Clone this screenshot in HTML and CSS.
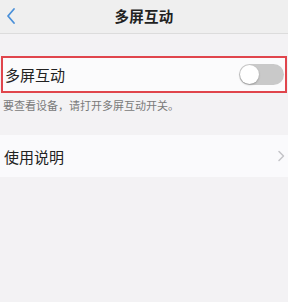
FILE: index.html
```html
<!DOCTYPE html>
<html>
<head>
<meta charset="utf-8">
<link rel="stylesheet" href="styles.css">
</head>
<body>
<div class="nav">
  <svg class="back" width="12" height="18" viewBox="0 0 12 18"><path d="M9 2 L3 9 L9 16" fill="none" stroke="#4a90d9" stroke-width="1.8" stroke-linecap="round" stroke-linejoin="round"/></svg>
  <div class="title">多屏互动</div>
</div>
<div class="gap1"></div>
<div class="row highlight">
  <span class="label">多屏互动</span>
  <span class="toggle"><span class="knob"></span></span>
</div>
<div class="caption">要查看设备，请打开多屏互动开关。</div>
<div class="gap2"></div>
<div class="row plain">
  <span class="label">使用说明</span>
  <svg class="chev" width="8" height="12" viewBox="0 0 8 12"><path d="M2 1.5 L6.5 6 L2 10.5" fill="none" stroke="#c4c4c8" stroke-width="1.5" stroke-linecap="round" stroke-linejoin="round"/></svg>
</div>
</body>
</html>
```
FILE: styles.css
```css
html, body {
  margin: 0;
  padding: 0;
  background: #f3f2f4;
  font-family: "Noto Sans CJK SC", "Noto Sans", sans-serif;
  width: 288px;
  height: 302px;
  overflow: hidden;
}
.nav {
  height: 33px;
  background: #efefef;
  border-bottom: 1px solid #dcdcdc;
  display: flex;
  align-items: center;
  justify-content: center;
  position: relative;
}
.back {
  position: absolute;
  left: 5px;
  top: 7px;
}
.title {
  font-size: 14.5px;
  font-weight: bold;
  color: #222;
  letter-spacing: 0.3px;
  margin-top: -2px;
}
.gap1 {
  height: 22px;
}
.row {
  display: flex;
  align-items: center;
  justify-content: space-between;
  background: #fbfbfc;
}
.highlight {
  height: 33px;
  margin: 0 1px 0 1px;
  border: 2px solid #e0454c;
  padding: 0 1px 0 2px;
}
.label {
  font-size: 15px;
  color: #222;
}
.toggle {
  width: 45px;
  height: 21px;
  border-radius: 11px;
  background: #c9c9c9;
  position: relative;
  display: block;
}
.knob {
  position: absolute;
  left: 1px;
  top: 1px;
  width: 19px;
  height: 19px;
  border-radius: 50%;
  background: #ffffff;
  box-shadow: 0 1px 2px rgba(0,0,0,0.25);
}
.caption {
  font-size: 11px;
  color: #7a7a7a;
  padding: 5px 0 0 3px;
  line-height: 14px;
}
.gap2 {
  height: 23px;
}
.plain {
  height: 42px;
  padding: 0 3px 0 4px;
  background: #fafafc;
}
```
